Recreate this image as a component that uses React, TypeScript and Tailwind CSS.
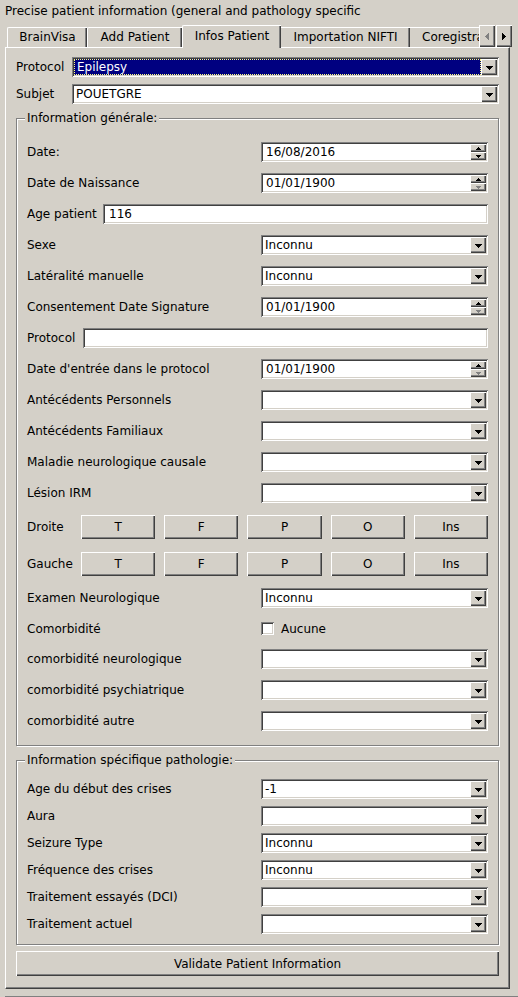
import React from "react";

const sunken =
  "bg-white shadow-[inset_1px_1px_0_#808080,inset_-1px_-1px_0_#ffffff,inset_2px_2px_0_#404040,inset_-2px_-2px_0_#d4d0c8]";
const raised =
  "bg-[#d4d0c8] shadow-[inset_1px_1px_0_#ffffff,inset_-1px_-1px_0_#404040,inset_-2px_-2px_0_#808080]";

function DownTri({ color = "#000" }: { color?: string }) {
  return (
    <svg width="7" height="4" viewBox="0 0 7 4" shapeRendering="crispEdges">
      <polygon points="0,0 7,0 3.5,4" fill={color} />
    </svg>
  );
}

function SmallTri({ up, color = "#000" }: { up?: boolean; color?: string }) {
  return (
    <svg width="5" height="3" viewBox="0 0 5 3" shapeRendering="crispEdges">
      <polygon points={up ? "2.5,0 5,3 0,3" : "0,0 5,0 2.5,3"} fill={color} />
    </svg>
  );
}

function ArrowBtn() {
  return (
    <div className={`flex h-[16px] w-[16px] flex-none items-center justify-center pt-[1px] ${raised}`}>
      <DownTri />
    </div>
  );
}

function Combo({ value = "" }: { value?: string }) {
  return (
    <div className={`flex h-[20px] w-full items-center p-[2px] ${sunken}`}>
      <div className="flex-1 truncate pl-[2px] leading-[16px]">{value}</div>
      <ArrowBtn />
    </div>
  );
}

function Spin({ value, downDisabled }: { value: string; downDisabled?: boolean }) {
  return (
    <div className={`flex h-[20px] w-full items-center p-[2px] ${sunken}`}>
      <div className="flex-1 pl-[3px] leading-[16px]">{value}</div>
      <div className="flex h-[16px] w-[16px] flex-none flex-col">
        <div className={`flex h-[8px] items-center justify-center ${raised}`}>
          <SmallTri up />
        </div>
        <div className={`flex h-[8px] items-center justify-center ${raised}`}>
          <SmallTri color={downDisabled ? "#808080" : "#000"} />
        </div>
      </div>
    </div>
  );
}

function LineEdit({ value = "" }: { value?: string }) {
  return (
    <div className={`flex h-[20px] w-full items-center px-[6px] ${sunken}`}>{value}</div>
  );
}

function Row({ label, children }: { label: string; children: React.ReactNode }) {
  return (
    <div className="flex h-[20px] items-center">
      <div className="w-[234px] flex-none">{label}</div>
      <div className="flex-1">{children}</div>
    </div>
  );
}

function SideButtons({ label }: { label: string }) {
  return (
    <div className="flex h-[26px] items-center">
      <div className="w-[54px] flex-none">{label}</div>
      <div className="flex flex-1 gap-[9px]">
        {["T", "F", "P", "O", "Ins"].map((b) => (
          <div key={b} className={`flex h-[24px] flex-1 items-center justify-center ${raised}`}>
            {b}
          </div>
        ))}
      </div>
    </div>
  );
}

function Group({ title, className, children }: { title: string; className: string; children: React.ReactNode }) {
  return (
    <div
      className={`relative border border-[#808080] shadow-[inset_1px_1px_0_#ffffff,1px_1px_0_#ffffff] ${className}`}
    >
      <div className="absolute left-[8px] top-[-9px] bg-[#d4d0c8] px-[2px] leading-[16px]">{title}</div>
      {children}
    </div>
  );
}

export default function App() {
  const tabs = [
    { name: "BrainVisa", w: "w-[80px]" },
    { name: "Add Patient", w: "w-[95px]" },
  ];

  return (
    <div className="h-[997px] w-[518px] overflow-hidden bg-[#d4d0c8] font-['DejaVu_Sans',sans-serif] text-[12px] text-black">
      {/* window title */}
      <div className="flex h-[22px] items-center pl-[5px]">
        Precise patient information (general and pathology specific
      </div>

      {/* tab bar */}
      <div className="relative z-10 ml-[5px] flex h-[26px] items-end">
        <div className="flex h-full w-[474px] flex-none items-end overflow-hidden pl-[2px]">
          {tabs.map((t) => (
            <div
              key={t.name}
              className={`flex h-[20px] flex-none items-center justify-center rounded-tl-[2px] border-l border-t border-white pb-[1px] shadow-[inset_-1px_0_0_#404040,inset_-2px_0_0_#808080] ${t.w} mb-[1px]`}
            >
              {t.name}
            </div>
          ))}
          <div className="flex h-[23px] w-[99px] flex-none items-center justify-center rounded-tl-[2px] border-l border-t border-white bg-[#d4d0c8] pb-[2px] shadow-[inset_-1px_0_0_#404040,inset_-2px_0_0_#808080]">
            Infos Patient
          </div>
          <div className="mb-[1px] flex h-[20px] w-[129px] flex-none items-center justify-center border-t border-white pb-[1px] shadow-[inset_-1px_0_0_#404040,inset_-2px_0_0_#808080]">
            Importation NIFTI
          </div>
          <div className="mb-[1px] flex h-[20px] w-[110px] flex-none items-center border-t border-white pb-[1px] pl-[12px]">
            Coregistration
          </div>
        </div>
        <div className={`mb-[1px] flex h-[22px] w-[16px] flex-none items-center justify-center ${raised}`}>
          <svg width="4" height="7" viewBox="0 0 4 7" shapeRendering="crispEdges">
            <polygon points="1,3.5 5,0 5,7" fill="#ffffff" />
            <polygon points="0,3.5 4,0 4,7" fill="#808080" />
          </svg>
        </div>
        <div className={`mb-[1px] ml-[1px] flex h-[22px] w-[16px] flex-none items-center justify-center ${raised}`}>
          <svg width="4" height="7" viewBox="0 0 4 7" shapeRendering="crispEdges">
            <polygon points="0,0 4,3.5 0,7" fill="#000" />
          </svg>
        </div>
      </div>

      {/* tab pane */}
      <div className="-mt-[1px] ml-[5px] flex h-[942px] w-[505px] flex-col border-b border-l border-r border-t border-b-[#404040] border-l-white border-r-[#404040] border-t-white px-[10px] pt-[9px] shadow-[inset_-1px_-1px_0_#808080]">
        <div className="flex flex-col gap-[7px]">
          <div className="flex h-[20px] items-center">
            <div className="w-[56px] flex-none">Protocol</div>
            <div className={`flex h-[20px] flex-1 items-center p-[2px] ${sunken}`}>
              <div className="flex h-full flex-1 items-center border border-dotted border-[#ffff80] bg-[#000080] pl-[2px] text-white">
                Epilepsy
              </div>
              <ArrowBtn />
            </div>
          </div>
          <div className="flex h-[20px] items-center">
            <div className="w-[56px] flex-none">Subjet</div>
            <div className="flex-1">
              <Combo value="POUETGRE" />
            </div>
          </div>
        </div>

        <Group title="Information générale:" className="mt-[14px] px-[10px] pb-[14px] pt-[23px]">
          <div className="flex flex-col gap-[11px]">
            <Row label="Date:">
              <Spin value="16/08/2016" />
            </Row>
            <Row label="Date de Naissance">
              <Spin value="01/01/1900" downDisabled />
            </Row>
            <div className="flex h-[20px] items-center">
              <div className="w-[76px] flex-none">Age patient</div>
              <LineEdit value="116" />
            </div>
            <Row label="Sexe">
              <Combo value="Inconnu" />
            </Row>
            <Row label="Latéralité manuelle">
              <Combo value="Inconnu" />
            </Row>
            <Row label="Consentement Date Signature">
              <Spin value="01/01/1900" downDisabled />
            </Row>
            <div className="flex h-[20px] items-center">
              <div className="w-[56px] flex-none">Protocol</div>
              <LineEdit />
            </div>
            <Row label="Date d'entrée dans le protocol">
              <Spin value="01/01/1900" downDisabled />
            </Row>
            <Row label="Antécédents Personnels">
              <Combo />
            </Row>
            <Row label="Antécédents Familiaux">
              <Combo />
            </Row>
            <Row label="Maladie neurologique causale">
              <Combo />
            </Row>
            <Row label="Lésion IRM">
              <Combo />
            </Row>
            <SideButtons label="Droite" />
            <SideButtons label="Gauche" />
            <Row label="Examen Neurologique">
              <Combo value="Inconnu" />
            </Row>
            <div className="flex h-[19px] items-center">
              <div className="w-[234px] flex-none">Comorbidité</div>
              <div className="flex items-center gap-[7px]">
                <div className={`h-[13px] w-[13px] ${sunken}`} />
                <span>Aucune</span>
              </div>
            </div>
            <Row label="comorbidité neurologique">
              <Combo />
            </Row>
            <Row label="comorbidité psychiatrique">
              <Combo />
            </Row>
            <Row label="comorbidité autre">
              <Combo />
            </Row>
          </div>
        </Group>

        <Group title="Information spécifique pathologie:" className="mt-[14px] px-[10px] pb-[10px] pt-[18px]">
          <div className="flex flex-col gap-[7px]">
            <Row label="Age du début des crises">
              <Combo value="-1" />
            </Row>
            <Row label="Aura">
              <Combo />
            </Row>
            <Row label="Seizure Type">
              <Combo value="Inconnu" />
            </Row>
            <Row label="Fréquence des crises">
              <Combo value="Inconnu" />
            </Row>
            <Row label="Traitement essayés (DCI)">
              <Combo />
            </Row>
            <Row label="Traitement actuel">
              <Combo />
            </Row>
          </div>
        </Group>

        <div className={`mt-[6px] flex h-[25px] items-center justify-center ${raised}`}>
          Validate Patient Information
        </div>
      </div>

      <div className="ml-[5px] mt-[7px] h-[2px] border-t border-[#808080] bg-[#404040]" />
    </div>
  );
}
